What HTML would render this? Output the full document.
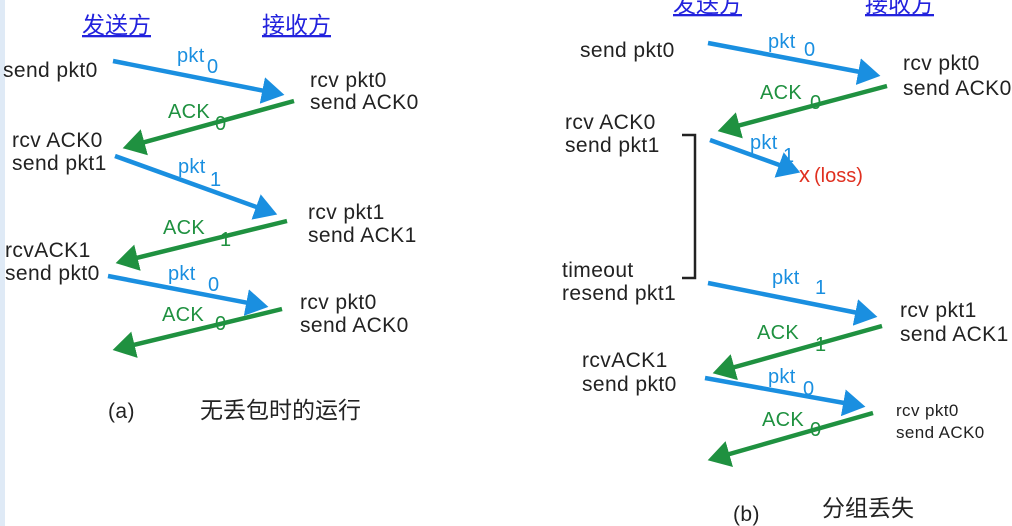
<!DOCTYPE html>
<html><head><meta charset="utf-8"><style>
html,body{margin:0;padding:0;background:#fff;}
svg{display:block;}
text{font-family:"Liberation Sans","Noto Sans CJK SC",sans-serif;}
.k{fill:#222;font-size:21px;letter-spacing:0.4px;}
.b{fill:#1a8fe0;font-size:20px;letter-spacing:0.3px;}
.g{fill:#1f9140;font-size:20px;letter-spacing:0.3px;}
.h{fill:#2222dd;font-size:23px;text-decoration:underline;}
.c{fill:#222;font-size:23px;}
</style></head><body>
<svg width="1012" height="526" viewBox="0 0 1012 526" xmlns="http://www.w3.org/2000/svg">
<defs>
<marker id="ab" markerWidth="6" markerHeight="6" refX="4" refY="3" orient="auto" markerUnits="strokeWidth"><path d="M0,0 L5,3 L0,6 Z" fill="#1a8fe0"/></marker>
<marker id="ag" markerWidth="6" markerHeight="6" refX="4" refY="3" orient="auto" markerUnits="strokeWidth"><path d="M0,0 L5,3 L0,6 Z" fill="#1f9140"/></marker>
</defs>
<rect x="0" y="0" width="5" height="526" fill="#dfeaf6"/>
<g stroke-width="4.5" fill="none">
<line x1="113" y1="61" x2="280" y2="94" stroke="#1a8fe0" marker-end="url(#ab)"/>
<line x1="294" y1="101" x2="127" y2="147" stroke="#1f9140" marker-end="url(#ag)"/>
<line x1="115" y1="156" x2="273" y2="213" stroke="#1a8fe0" marker-end="url(#ab)"/>
<line x1="287" y1="221" x2="120" y2="262" stroke="#1f9140" marker-end="url(#ag)"/>
<line x1="108" y1="276" x2="264" y2="306" stroke="#1a8fe0" marker-end="url(#ab)"/>
<line x1="282" y1="309" x2="117" y2="349" stroke="#1f9140" marker-end="url(#ag)"/>

<line x1="708" y1="43" x2="876" y2="75" stroke="#1a8fe0" marker-end="url(#ab)"/>
<line x1="887" y1="86" x2="722" y2="130" stroke="#1f9140" marker-end="url(#ag)"/>
<line x1="710" y1="140" x2="796" y2="171" stroke="#1a8fe0" marker-end="url(#ab)"/>
<line x1="708" y1="283" x2="873" y2="316" stroke="#1a8fe0" marker-end="url(#ab)"/>
<line x1="882" y1="326" x2="717" y2="372" stroke="#1f9140" marker-end="url(#ag)"/>
<line x1="705" y1="378" x2="861" y2="406" stroke="#1a8fe0" marker-end="url(#ab)"/>
<line x1="873" y1="413" x2="712" y2="459" stroke="#1f9140" marker-end="url(#ag)"/>
<polyline points="682,135 695,135 695,278 682,278" stroke="#222" stroke-width="2.5"/>
</g>

<text class="h" x="82" y="33">发送方</text>
<text class="h" x="262" y="33">接收方</text>
<text class="h" x="673" y="12">发送方</text>
<text class="h" x="865" y="12">接收方</text>

<text class="k" x="3" y="77">send pkt0</text>
<text class="b" x="177" y="62">pkt</text><text class="b" x="207" y="73">0</text>
<text class="k" x="310" y="87">rcv pkt0</text>
<text class="k" x="310" y="109">send ACK0</text>
<text class="g" x="168" y="118">ACK</text><text class="g" x="215" y="130">0</text>
<text class="k" x="12" y="147">rcv ACK0</text>
<text class="k" x="12" y="170">send pkt1</text>
<text class="b" x="178" y="173">pkt</text><text class="b" x="210" y="186">1</text>
<text class="k" x="308" y="219">rcv pkt1</text>
<text class="k" x="308" y="242">send ACK1</text>
<text class="g" x="163" y="234">ACK</text><text class="g" x="220" y="246">1</text>
<text class="k" x="5" y="257">rcvACK1</text>
<text class="k" x="5" y="280">send pkt0</text>
<text class="b" x="168" y="280">pkt</text><text class="b" x="208" y="291">0</text>
<text class="k" x="300" y="309">rcv pkt0</text>
<text class="k" x="300" y="332">send ACK0</text>
<text class="g" x="162" y="321">ACK</text><text class="g" x="215" y="330">0</text>
<text class="k" x="108" y="418">(a)</text>
<text class="c" x="200" y="418">无丢包时的运行</text>

<text class="k" x="580" y="57">send pkt0</text>
<text class="b" x="768" y="48">pkt</text><text class="b" x="804" y="56">0</text>
<text class="k" x="903" y="70">rcv pkt0</text>
<text class="k" x="903" y="95">send ACK0</text>
<text class="g" x="760" y="99">ACK</text><text class="g" x="810" y="109">0</text>
<text class="k" x="565" y="129">rcv ACK0</text>
<text class="k" x="565" y="152">send pkt1</text>
<text class="b" x="750" y="149">pkt</text><text class="b" x="783" y="162">1</text>
<text x="799" y="182" style="fill:#e03020;font-size:22px;">x</text>
<text x="814" y="182" style="fill:#e03020;font-size:20px;">(loss)</text>
<text class="k" x="562" y="277">timeout</text>
<text class="k" x="562" y="300">resend pkt1</text>
<text class="b" x="772" y="284">pkt</text><text class="b" x="815" y="294">1</text>
<text class="k" x="900" y="317">rcv pkt1</text>
<text class="k" x="900" y="341">send ACK1</text>
<text class="g" x="757" y="339">ACK</text><text class="g" x="815" y="351">1</text>
<text class="k" x="582" y="367">rcvACK1</text>
<text class="k" x="582" y="391">send pkt0</text>
<text class="b" x="768" y="383">pkt</text><text class="b" x="803" y="395">0</text>
<text class="k" x="896" y="416" style="font-size:17px">rcv pkt0</text>
<text class="k" x="896" y="438" style="font-size:17px">send ACK0</text>
<text class="g" x="762" y="426">ACK</text><text class="g" x="810" y="436">0</text>
<text class="k" x="733" y="521">(b)</text>
<text class="c" x="822" y="516">分组丢失</text>
</svg>
</body></html>
